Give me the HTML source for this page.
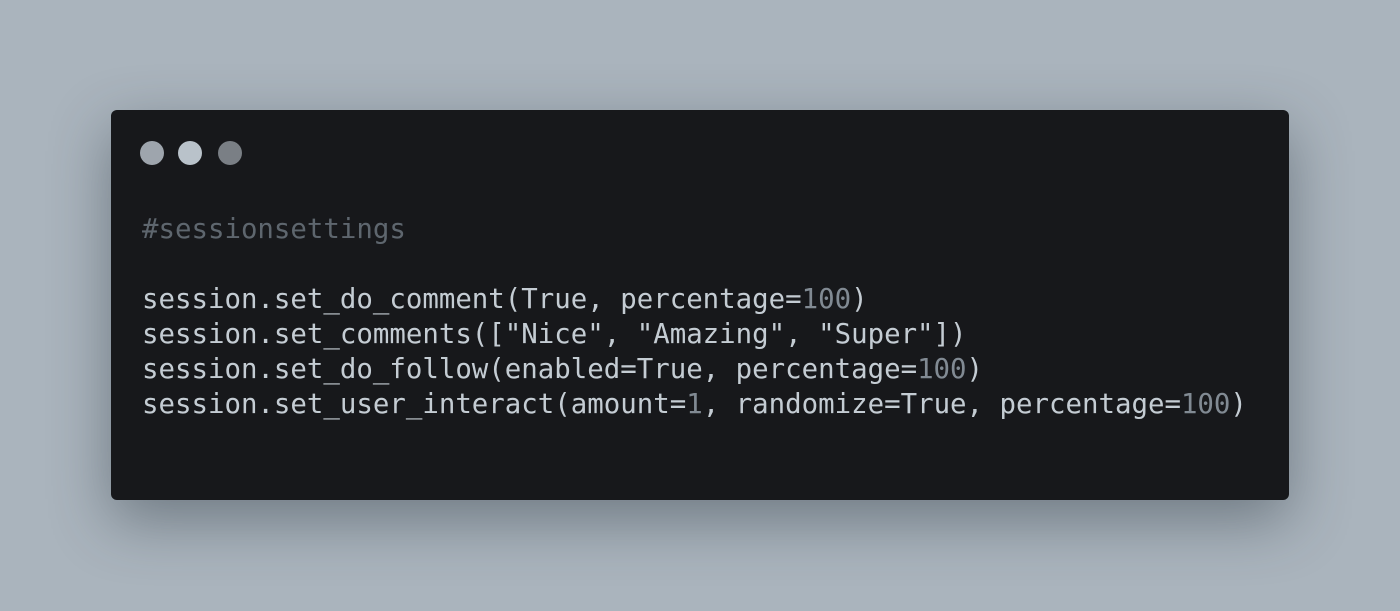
<!DOCTYPE html>
<html><head><style>
html,body{margin:0;padding:0}
body{width:1400px;height:611px;background:#aab4bd;position:relative;overflow:hidden;font-family:"DejaVu Sans Mono","Liberation Mono",monospace}
.win{position:absolute;left:111px;top:110px;width:1178px;height:390px;background:#17181b;border-radius:6px;box-shadow:0 20px 60px rgba(40,50,60,.45)}
.dot{position:absolute;top:141px;width:24px;height:24px;border-radius:50%}
pre{position:absolute;left:142px;top:212px;margin:0;font-family:inherit;font-size:27.4px;line-height:35px;color:#c4ccd3}
.c{color:#5e666e}.n{color:#818a93}
</style></head><body>
<div class="win"></div>
<div class="dot" style="left:140px;background:#9ea5ad"></div>
<div class="dot" style="left:178px;background:#b9c2ca"></div>
<div class="dot" style="left:218px;background:#7a7f85"></div>
<pre><span class="c">#sessionsettings</span>

session.set_do_comment(True, percentage=<span class="n">100</span>)
session.set_comments(["Nice", "Amazing", "Super"])
session.set_do_follow(enabled=True, percentage=<span class="n">100</span>)
session.set_user_interact(amount=<span class="n">1</span>, randomize=True, percentage=<span class="n">100</span>)</pre>
</body></html>
